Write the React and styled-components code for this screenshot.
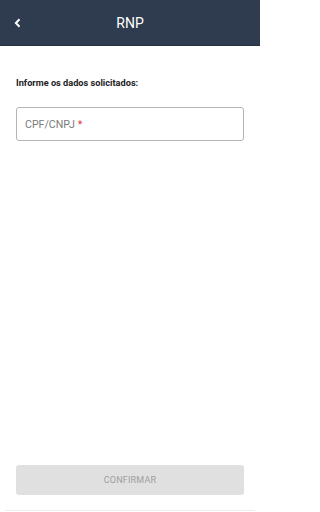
import React from "react";
import styled, { createGlobalStyle } from "styled-components";

const GlobalStyle = createGlobalStyle`
  html, body {
    margin: 0;
    padding: 0;
    background: #fff;
    font-family: Roboto, "Liberation Sans", sans-serif;
  }
`;

const Screen = styled.div`
  width: 260px;
  height: 512px;
  display: flex;
  flex-direction: column;
  background: #fff;
`;

const Header = styled.header`
  height: 45px;
  background: #2f3b4e;
  border-bottom: 1px solid #263140;
  display: grid;
  grid-template-columns: 40px 1fr 40px;
  align-items: center;
`;

const BackButton = styled.button`
  border: none;
  background: none;
  padding: 0 0 0 13px;
  display: flex;
  align-items: center;
  color: #fff;
`;

const Title = styled.h1`
  margin: 0;
  text-align: center;
  color: #fff;
  font-size: 14px;
  font-weight: 400;
`;

const Content = styled.main`
  flex: 1;
  display: flex;
  flex-direction: column;
  padding: 31px 16px 0;
`;

const Label = styled.p`
  margin: 0 0 19px;
  font-size: 9.2px;
  font-weight: 700;
  color: #222;
`;

const InputBox = styled.div`
  height: 32px;
  border: 1px solid #b5b5b5;
  border-radius: 3px;
  display: flex;
  align-items: center;
  padding: 0 8px;
  font-size: 10.6px;
  color: #7a7a7a;
`;

const Required = styled.span`
  color: #e53935;
  margin-left: 3px;
`;

const Footer = styled.footer`
  margin: 0 5px 1px;
  padding: 0 11px 15px;
  border-bottom: 1px solid #eeeeee;
`;

const ConfirmButton = styled.button`
  width: 100%;
  height: 30px;
  border: none;
  border-radius: 3px;
  background: #e0e0e0;
  color: #9e9e9e;
  font-family: inherit;
  font-size: 9px;
  letter-spacing: 0.2px;
`;

export default function App() {
  return (
    <Screen>
      <GlobalStyle />
      <Header>
        <BackButton>
          <svg width="10" height="10" viewBox="0 0 10 10">
            <path d="M6.5 1.3 L2.9 5 L6.5 8.7" fill="none" stroke="#fff" strokeWidth="2" />
          </svg>
        </BackButton>
        <Title>RNP</Title>
        <span />
      </Header>
      <Content>
        <Label>Informe os dados solicitados:</Label>
        <InputBox>
          CPF/CNPJ<Required>*</Required>
        </InputBox>
      </Content>
      <Footer>
        <ConfirmButton disabled>CONFIRMAR</ConfirmButton>
      </Footer>
    </Screen>
  );
}
